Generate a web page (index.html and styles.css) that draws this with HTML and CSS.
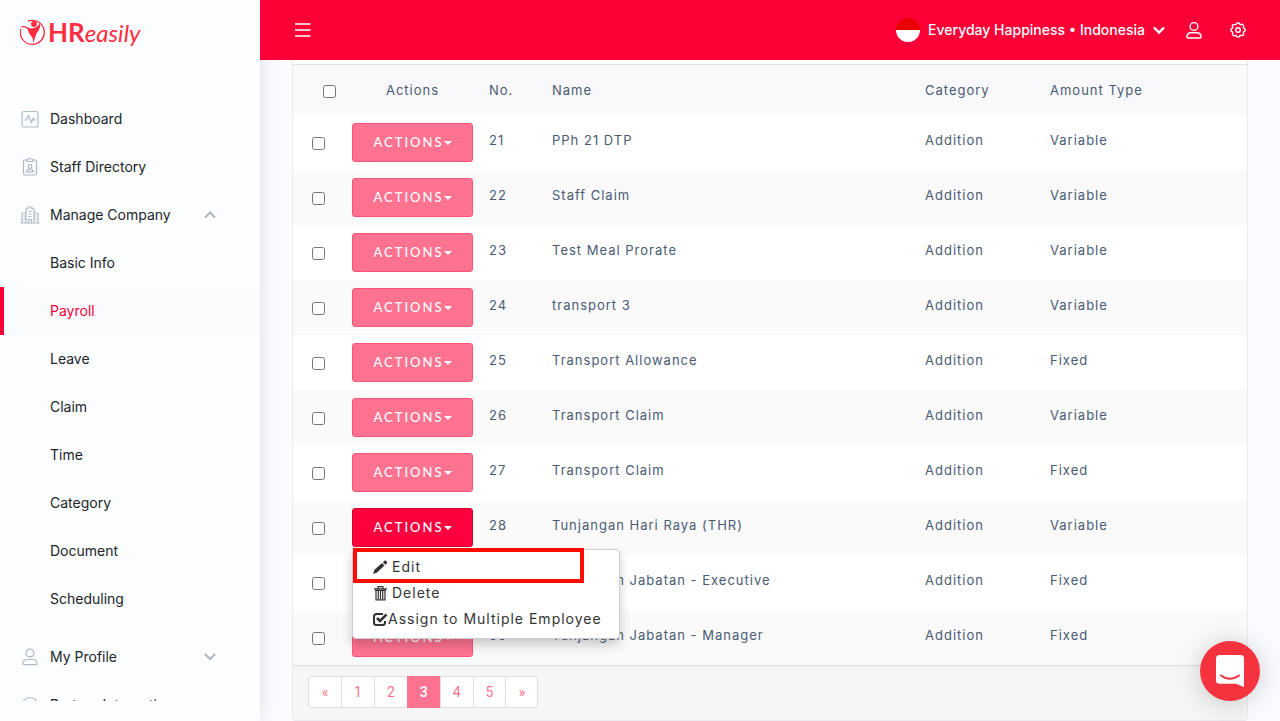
FILE: index.html
```html
<!DOCTYPE html>
<html lang="en">
<head>
    <meta charset="UTF-8">
    <meta name="viewport" content="width=device-width, initial-scale=1.0">
    <title>Payroll - HReasily</title>
    <link rel="stylesheet" href="styles.css">
</head>
<body>
    <aside class="sidebar">
        <a class="logo" href="#">
            <svg width="26" height="26" viewBox="0 0 26 26" fill="none" stroke="#ff2d3f" stroke-width="1.3">
                <path d="M8 2.200A12 12 0 1 1 .8 10"/>
                <circle cx="14" cy="5" r="2.900" fill="#ff2d3f" stroke="none"/>
                <path d="M.5 8.500C2 6.200 5.500 7 8 8.600c2 1.200 4 1 6.500.2C17 8 19 6.500 19.500 4c1.500 3.500-.3 7-2.300 9.500-1.700 2.200-1.500 5-4.200 10.500.5-4.500-1-6-3-8.500C8 13 8.500 9.500 5 8.500c-1.800-.5-3.200-.5-4.500 0z" fill="#ff2d3f" stroke="none"/>
            </svg>
            <span class="logo-bold">HR</span><span class="logo-light">easily</span>
        </a>

        <nav class="menu">
            <a class="menu-item" href="#">
                <svg width="20" height="20" viewBox="0 0 20 20" class="line-icon"><rect x="2" y="2.500" width="16" height="15.500" rx="2"/><path d="M4.500 11h2l2-4.500 3 7 1.800-4.200.8 1.700h1.700"/></svg>
                <span>Dashboard</span>
            </a>
            <a class="menu-item" href="#">
                <svg width="20" height="20" viewBox="0 0 20 20" class="line-icon"><path d="M7 3H5a1.500 1.500 0 0 0-1.500 1.500v12A1.500 1.500 0 0 0 5 18h10a1.500 1.500 0 0 0 1.500-1.500v-12A1.500 1.500 0 0 0 15 3h-2"/><path d="M7 4.500V3c0-.6.400-1 1-1h.700a1.500 1.500 0 0 1 2.600 0h.7c.6 0 1 .4 1 1v1.500z"/><circle cx="10" cy="9.500" r="1.800"/><path d="M6.500 14.800c.5-2 1.500-2.600 3.500-2.600s3 .6 3.500 2.600z"/></svg>
                <span>Staff Directory</span>
            </a>
            <a class="menu-item" href="#">
                <svg width="20" height="20" viewBox="0 0 20 20" class="line-icon"><path d="M.5 18h19M2 18V9c0-.6.400-1 1-1h3M18 18V9c0-.6-.4-1-1-1h-3M6 18V4.500c0-.6.400-1 1-1h1V2h4v1.500h1c.6 0 1 .4 1 1V18M8.500 6.500h3M8.500 9h3M8.500 11.500h3M8.500 18v-3.500h3V18M3.500 11H6M3.500 14H6M14 11h2.500M14 14h2.500"/></svg>
                <span>Manage Company</span>
                <svg class="arrow" width="12" height="8" viewBox="0 0 12 8"><path d="M1 6.500l5-5 5 5"/></svg>
            </a>
            <a class="menu-item sub" href="#"><span>Basic Info</span></a>
            <a class="menu-item sub active" href="#"><span>Payroll</span></a>
            <a class="menu-item sub" href="#"><span>Leave</span></a>
            <a class="menu-item sub" href="#"><span>Claim</span></a>
            <a class="menu-item sub" href="#"><span>Time</span></a>
            <a class="menu-item sub" href="#"><span>Category</span></a>
            <a class="menu-item sub" href="#"><span>Document</span></a>
            <a class="menu-item sub" href="#"><span>Scheduling</span></a>
            <a class="menu-item group" href="#">
                <svg width="20" height="20" viewBox="0 0 20 20" class="line-icon"><circle cx="10" cy="6" r="3.900"/><path d="M3 17c0-2.800 1.500-4.500 4-4.500h6c2.500 0 4 1.700 4 4.500 0 .4-.2.700-.7.700H3.700c-.5 0-.7-.3-.7-.7z"/></svg>
                <span>My Profile</span>
                <svg class="arrow" width="12" height="8" viewBox="0 0 12 8"><path d="M1 1l5 5 5-5"/></svg>
            </a>
            <a class="menu-item" href="#">
                <svg width="20" height="20" viewBox="0 0 20 20" class="line-icon"><circle cx="10" cy="10" r="7.500"/></svg>
                <span>Partner Integration</span>
            </a>
        </nav>
    </aside>

    <div class="page">
        <header class="topbar">
            <button type="button" class="icon-btn" aria-label="Toggle menu">
                <svg width="17" height="16" viewBox="0 0 17 16" stroke="#fff" stroke-width="1.700"><path d="M1 2h15.500M1 8h15.500M1 14h15.500"/></svg>
            </button>
            <button type="button" class="company">
                <span class="flag"></span>
                <span class="company-name">Everyday Happiness • Indonesia</span>
                <svg width="12" height="8" viewBox="0 0 12 8" fill="none" stroke="#fff" stroke-width="2.400"><path d="M1 1.500l5 5 5-5"/></svg>
            </button>
            <button type="button" class="icon-btn" aria-label="Account">
                <svg width="16" height="18" viewBox="0 0 16 18" fill="none" stroke="#fff" stroke-width="1.400"><circle cx="8" cy="5.500" r="3.900"/><path d="M1 16c0-2.500 1.500-4.200 4-4.200h6c2.500 0 4 1.700 4 4.200 0 .7-.3 1-1 1H2c-.7 0-1-.3-1-1z"/></svg>
            </button>
            <button type="button" class="icon-btn" aria-label="Settings">
                <svg width="16" height="16" viewBox="0 0 16 16" fill="none" stroke="#fff" stroke-width="1.400" stroke-linejoin="round"><path d="M6.200 2.300Q6.500.8 8 .8t1.800 1.500l1 .4q1.300-1 2.300.2t.2 2.300l.4 1Q15.200 6.500 15.200 8t-1.500 1.800l-.4 1q1 1.300-.2 2.300t-2.300.2l-1 .4Q9.500 15.200 8 15.200t-1.800-1.500l-1-.4q-1.300 1-2.300-.2t-.2-2.300l-.4-1Q.8 9.500.8 8t1.500-1.800l.4-1q-1-1.300.2-2.300t2.300-.2z"/><circle cx="8" cy="8" r="2.300"/></svg>
            </button>
        </header>

        <main class="content">
            <div class="card">
                <table class="pay-table">
                    <colgroup>
                        <col class="col-check"><col class="col-actions"><col class="col-no"><col><col class="col-category"><col class="col-amount">
                    </colgroup>
                    <thead>
                        <tr>
                            <th class="check-all"><input type="checkbox" aria-label="Select all"></th>
                            <th class="center">Actions</th>
                            <th>No.</th>
                            <th>Name</th>
                            <th>Category</th>
                            <th>Amount Type</th>
                        </tr>
                    </thead>
                    <tbody>
                        <tr>
                            <td class="check"><input type="checkbox" aria-label="Select 21"></td>
                            <td><button type="button" class="btn-actions">ACTIONS<span class="caret"></span></button></td>
                            <td>21</td><td>PPh 21 DTP</td><td>Addition</td><td>Variable</td>
                        </tr>
                        <tr>
                            <td class="check"><input type="checkbox" aria-label="Select 22"></td>
                            <td><button type="button" class="btn-actions">ACTIONS<span class="caret"></span></button></td>
                            <td>22</td><td>Staff Claim</td><td>Addition</td><td>Variable</td>
                        </tr>
                        <tr>
                            <td class="check"><input type="checkbox" aria-label="Select 23"></td>
                            <td><button type="button" class="btn-actions">ACTIONS<span class="caret"></span></button></td>
                            <td>23</td><td>Test Meal Prorate</td><td>Addition</td><td>Variable</td>
                        </tr>
                        <tr>
                            <td class="check"><input type="checkbox" aria-label="Select 24"></td>
                            <td><button type="button" class="btn-actions">ACTIONS<span class="caret"></span></button></td>
                            <td>24</td><td>transport 3</td><td>Addition</td><td>Variable</td>
                        </tr>
                        <tr>
                            <td class="check"><input type="checkbox" aria-label="Select 25"></td>
                            <td><button type="button" class="btn-actions">ACTIONS<span class="caret"></span></button></td>
                            <td>25</td><td>Transport Allowance</td><td>Addition</td><td>Fixed</td>
                        </tr>
                        <tr>
                            <td class="check"><input type="checkbox" aria-label="Select 26"></td>
                            <td><button type="button" class="btn-actions">ACTIONS<span class="caret"></span></button></td>
                            <td>26</td><td>Transport Claim</td><td>Addition</td><td>Variable</td>
                        </tr>
                        <tr>
                            <td class="check"><input type="checkbox" aria-label="Select 27"></td>
                            <td><button type="button" class="btn-actions">ACTIONS<span class="caret"></span></button></td>
                            <td>27</td><td>Transport Claim</td><td>Addition</td><td>Fixed</td>
                        </tr>
                        <tr>
                            <td class="check"><input type="checkbox" aria-label="Select 28"></td>
                            <td>
                                <div class="dropdown">
                                    <button type="button" class="btn-actions open" aria-expanded="true">ACTIONS<span class="caret"></span></button>
                                    <div class="dropdown-menu">
                                        <a href="#"><svg width="15" height="15" viewBox="0 0 15 15" fill="#333"><path d="M0 14l1.500-4.200L9 3l2.500 2.600L4 12.600zM9.900 2.200L11.500.8c.5-.4 1-.4 1.400 0l1 1c.4.5.4 1 0 1.500l-1.500 1.400z"/></svg><span class="label">Edit</span></a>
                                        <a href="#"><svg width="15" height="15" viewBox="0 0 15 15" fill="none" stroke="#333" stroke-width="1.200"><path d="M1 2.800h13M5 2.500V.7h5v1.800M2 4.300h11M3 4.500v9.300h9V4.500M5.300 5v8M7.500 5v8M9.700 5v8"/></svg><span class="label">Delete</span></a>
                                        <a href="#"><svg width="15" height="15" viewBox="0 0 15 15" fill="none" stroke="#333" stroke-width="2"><path d="M10 2H3.500C2 2 1 3 1 4.500v6C1 12 2 13 3.500 13h6c1.500 0 2.500-1 2.500-2.500V9"/><path d="M4 6l3 3 6.500-6.500" stroke-width="2.500"/></svg><span>Assign to Multiple Employee</span></a>
                                        <span class="marker"></span>
                                    </div>
                                </div>
                            </td>
                            <td>28</td><td>Tunjangan Hari Raya (THR)</td><td>Addition</td><td>Variable</td>
                        </tr>
                        <tr>
                            <td class="check"><input type="checkbox" aria-label="Select 29"></td>
                            <td><button type="button" class="btn-actions">ACTIONS<span class="caret"></span></button></td>
                            <td>29</td><td>Tunjangan Jabatan - Executive</td><td>Addition</td><td>Fixed</td>
                        </tr>
                        <tr>
                            <td class="check"><input type="checkbox" aria-label="Select 30"></td>
                            <td><button type="button" class="btn-actions">ACTIONS<span class="caret"></span></button></td>
                            <td>30</td><td>Tunjangan Jabatan - Manager</td><td>Addition</td><td>Fixed</td>
                        </tr>
                    </tbody>
                </table>

                <div class="card-footer">
                    <nav class="pagination" aria-label="Pages">
                        <a href="#">«</a>
                        <a href="#">1</a>
                        <a href="#">2</a>
                        <a href="#" class="current">3</a>
                        <a href="#">4</a>
                        <a href="#">5</a>
                        <a href="#">»</a>
                    </nav>
                </div>
            </div>
        </main>
    </div>

    <button type="button" class="chat" aria-label="Open chat">
        <svg width="28" height="32" viewBox="0 0 28 32"><path d="M3.500 0h21A3.500 3.500 0 0 1 28 3.500V32l-8-3.300H3.500A3.500 3.500 0 0 1 0 25.200V3.500A3.500 3.500 0 0 1 3.500 0z" fill="#fff"/><path d="M5 20.500c5.500 4.200 12.500 4.200 18 0" fill="none" stroke="#f5333f" stroke-width="2" stroke-linecap="round"/></svg>
    </button>
</body>
</html>
```
FILE: styles.css
```css
* {
    box-sizing: border-box;
}
body {
    margin: 0;
    height: 100vh;
    display: flex;
    overflow: hidden;
    background: #fbfcff;
    font-family: Inter, sans-serif;
    font-size: 14px;
    color: #212529;
}
a {
    color: inherit;
    text-decoration: none;
}
button {
    font-family: inherit;
    cursor: pointer;
}

/* Sidebar */
.sidebar {
    width: 260px;
    flex-shrink: 0;
    display: flex;
    flex-direction: column;
    padding-bottom: 20px;
    background: #fcfdff;
    box-shadow: 0 0 20px rgba(0, 0, 0, 0.12);
    z-index: 1;
}
.logo {
    display: flex;
    align-items: center;
    height: 64px;
    margin-bottom: 31px;
    padding-left: 20px;
    font-family: Lato, sans-serif;
    color: #ff2d3f;
    flex-shrink: 0;
}
.logo-bold {
    margin-left: 2px;
    font-size: 26px;
    font-weight: 700;
}
.logo-light {
    font-size: 24px;
    font-style: italic;
    font-weight: 400;
}
.menu {
    flex: 1;
    min-height: 0;
    overflow: hidden;
}
.menu-item {
    display: flex;
    align-items: center;
    gap: 10px;
    height: 48px;
    padding: 0 44px 0 16px;
    border-left: 4px solid #fff;
}
.menu-item span {
    padding-bottom: 2px;
}
.menu-item.sub {
    padding-left: 46px;
}
.menu-item.active {
    border-left-color: #fa0036;
    background: #fafbfc;
    color: #fa0036;
}
.menu-item.group {
    margin-top: 10px;
}
.line-icon {
    fill: none;
    stroke: #b0bac4;
    stroke-width: 1.2;
}
.arrow {
    margin-left: auto;
    fill: none;
    stroke: #adb5bd;
    stroke-width: 2;
}

/* Top bar */
.page {
    flex: 1;
    min-width: 0;
    display: flex;
    flex-direction: column;
}
.topbar {
    display: flex;
    align-items: center;
    height: 60px;
    flex-shrink: 0;
    padding: 0 34px;
    background: #fa0036;
    z-index: 2;
}
.icon-btn {
    display: flex;
    padding: 0;
    border: none;
    background: none;
}
.topbar .icon-btn + .icon-btn {
    margin-left: 28px;
}
.company {
    display: flex;
    align-items: center;
    gap: 8px;
    margin-left: auto;
    margin-right: 21px;
    padding: 0;
    border: none;
    background: none;
    color: #fff;
    font-size: 14px;
    font-weight: 500;
}
.company-name {
    padding-bottom: 2px;
}
.flag {
    width: 24px;
    height: 24px;
    border-radius: 50%;
    background: linear-gradient(#ea0000 50%, #fff 50%);
}

/* Pay items table */
.content {
    padding: 0 32px;
}
.card {
    padding-top: 4px;
    border: 1px solid #e9ebf0;
    border-top: none;
    border-radius: 0 0 4px 4px;
    background: #fff;
}
.pay-table {
    width: 100%;
    table-layout: fixed;
    border-collapse: separate;
    border-spacing: 0;
    border-top: 1px solid #dee2e6;
    font-size: 13px;
    letter-spacing: 1px;
    color: #495b74;
}
.col-check {
    width: 51px;
}
.col-actions {
    width: 137px;
}
.col-no {
    width: 63px;
}
.col-category {
    width: 125px;
}
.col-amount {
    width: 205px;
}
th {
    height: 50px;
    padding: 0 8px;
    background: #f9f9fb;
    font-weight: 400;
    text-align: left;
}
th.center {
    text-align: center;
}
th.check-all {
    padding: 0 0 2px 30px;
}
td {
    height: 55px;
    padding: 8px;
    line-height: 34px;
    vertical-align: top;
    white-space: nowrap;
}
td.check {
    padding-left: 19px;
    line-height: 36px;
}
tbody tr:nth-child(even) {
    background: #fafafa;
}
input[type="checkbox"] {
    width: 13px;
    height: 13px;
    margin: 3px 0 0;
    vertical-align: middle;
}
.btn-actions {
    display: flex;
    align-items: center;
    justify-content: center;
    width: 100%;
    height: 39px;
    padding: 0 0 2px;
    border: 1px solid #ff5478;
    border-radius: 3px;
    background: #ff7391;
    color: #fff;
    font-family: Lato, sans-serif;
    font-size: 13px;
    font-weight: 500;
    letter-spacing: 2px;
}
.btn-actions.open {
    border-color: #d6002f;
    background: #ff003f;
}
.caret {
    margin-top: 3px;
    border: 4px solid transparent;
    border-top-color: #fff;
    border-bottom: none;
}

.dropdown {
    position: relative;
}
.dropdown-menu {
    position: absolute;
    top: 41px;
    left: 0;
    z-index: 1;
    padding: 4px 0 6px;
    border: 1px solid #ccc;
    border-radius: 4px;
    background: #fff;
    box-shadow: 0 6px 12px rgba(0, 0, 0, 0.2);
}
.dropdown-menu a {
    display: flex;
    align-items: center;
    padding: 0 17px 0 20px;
    font-size: 14px;
    line-height: 26px;
    color: #333;
}
.dropdown-menu .label {
    margin-left: 4px;
}
.marker {
    position: absolute;
    top: -2px;
    left: 0;
    width: 231px;
    height: 35px;
    border: 4px solid #fd0d00;
    pointer-events: none;
}

.card-footer {
    padding: 10px 15px 12px;
    border-top: 1px solid #ddd;
    background: #f6f6f6;
}
.pagination {
    display: flex;
    width: max-content;
    border: 1px solid #ddd;
    border-radius: 4px;
    background: #fff;
    font-family: Roboto, sans-serif;
    font-size: 14px;
    color: #ff7391;
}
.pagination a {
    min-width: 32px;
    padding: 0 12px;
    line-height: 30px;
    text-align: center;
}
.pagination a + a {
    border-left: 1px solid #ddd;
}
.pagination .current {
    margin: -1px 0;
    border-color: #ff7391;
    background: #ff7391;
    color: #fff;
    font-weight: 500;
    line-height: 32px;
}

/* Chat launcher */
.chat {
    position: fixed;
    right: 20px;
    bottom: 20px;
    z-index: 3;
    display: flex;
    align-items: center;
    justify-content: center;
    width: 60px;
    height: 60px;
    padding: 0;
    border: none;
    border-radius: 50%;
    background: #f5333f;
    box-shadow: 0 2px 28px rgba(0, 0, 0, 0.2);
}
```
